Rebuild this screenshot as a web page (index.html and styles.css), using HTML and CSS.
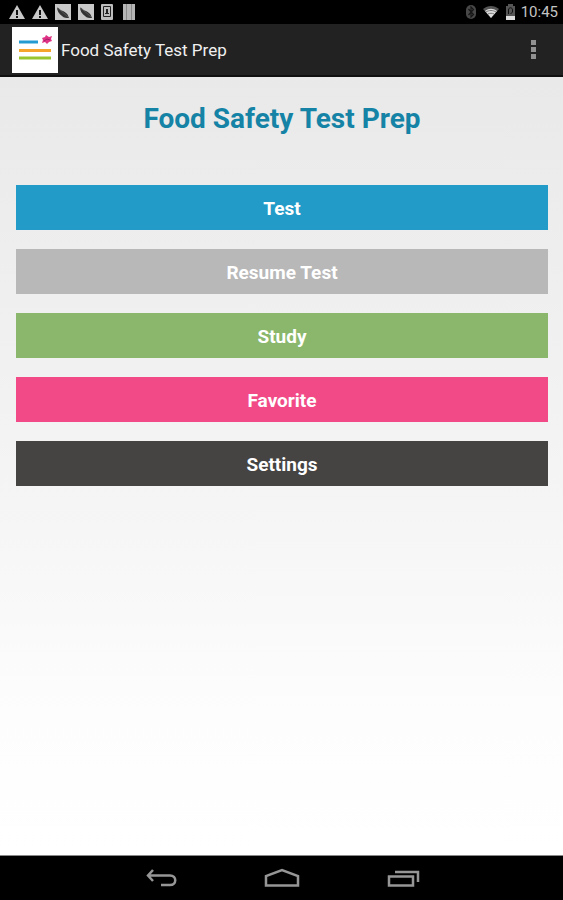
FILE: index.html
```html
<!DOCTYPE html>
<html lang="en">
<head>
<meta charset="utf-8">
<meta name="viewport" content="width=device-width, initial-scale=1">
<title>Food Safety Test Prep</title>
<link rel="stylesheet" href="styles.css">
</head>
<body>
<div class="status-bar">
  <div class="notices">
    <svg width="16" height="16" viewBox="0 0 16 16"><path fill="#c8c8c8" d="M8 1 16 15H0Z"/><path fill="#111" d="M7 6h2v5H7zM7 12h2v2H7z"/></svg>
    <svg width="16" height="16" viewBox="0 0 16 16"><path fill="#c8c8c8" d="M8 1 16 15H0Z"/><path fill="#111" d="M7 6h2v5H7zM7 12h2v2H7z"/></svg>
    <svg width="16" height="16" viewBox="0 0 16 16"><path fill="#c8c8c8" d="M0 0h16v16H0z"/><path fill="#333" d="M2 3c2 4 6 3 9 6 2 1 2 3 3 5-3 0-5 0-7-2-3-2-5-5-5-9Z"/><path d="m3 4 10 9" stroke="#555"/></svg>
    <svg width="16" height="16" viewBox="0 0 16 16"><path fill="#c8c8c8" d="M0 0h16v16H0z"/><path fill="#333" d="M2 3c2 4 6 3 9 6 2 1 2 3 3 5-3 0-5 0-7-2-3-2-5-5-5-9Z"/><path d="m3 4 10 9" stroke="#555"/></svg>
    <svg width="12" height="16" viewBox="0 0 12 16"><rect width="12" height="16" rx="1" fill="#bdbdbd"/><path d="M2.500 2.500h7v10h-7z" fill="none" stroke="#222"/><path fill="#222" d="M5 5h2v4H5zM4 9h4v1H4z"/></svg>
    <svg width="12" height="16" viewBox="0 0 12 16"><path fill="#b5b5b5" d="M0 0h12v16H0z"/><path stroke="#8a8a8a" d="M3.500 0v16M8.500 0v16"/></svg>
  </div>
  <div class="system">
    <svg width="12" height="16" viewBox="0 0 12 16"><rect x="1" y="1" width="10" height="14" rx="5" fill="#484848"/><path d="m3.500 5 5 5.500L6 13V3l2.500 2.500-5 5.500" fill="none" stroke="#161616" stroke-width="1.200"/></svg>
    <svg width="18" height="16" viewBox="0 0 18 16"><path fill="#555" d="M9 14 1 5c5-4 11-4 16 0Z"/><path fill="#ddd" d="M9 14 3 7c4-3 8-3 12 0Z"/><path d="M4 8c3-2 7-2 10 0M6 10c2-1 4-1 6 0" fill="none" stroke="#777"/></svg>
    <svg width="11" height="16" viewBox="0 0 11 16"><path fill="#555" d="M3 0h5v2h2v14H1V2h2z"/><path d="M3.500 10V6c0-3 4-3 4 0v2l-2 2" fill="none" stroke="#111"/><path fill="#ddd" d="M1 12h9v4H1z"/></svg>
    <time class="clock">10:45</time>
  </div>
</div>
<header class="action-bar">
  <svg class="app-icon" width="46" height="46" viewBox="0 0 46 46"><path fill="#fff" d="M0 0h46v46H0z"/><g stroke-width="3"><path stroke="#239bd0" d="M7 15h19"/><path stroke="#f5a52c" d="M7 23.500h32"/><path stroke="#99c52f" d="M7 31h32"/></g><path fill="#df3485" d="m30 11 3-1 1-2 3 2 3-1-1 3 1 2-3 1-2 2-2-2-3 1 1-3Z"/><path d="m32 14 3-2 3 1" fill="none" stroke="#a31c68"/></svg>
  <span class="app-name">Food Safety Test Prep</span>
  <button class="more" type="button" aria-label="More options">
    <svg width="7" height="21" viewBox="0 0 7 21"><path fill="#929292" d="M1 1h5v5H1zM1 8h5v5H1zM1 15h5v5H1z"/></svg>
  </button>
</header>
<main class="content">
  <h1 class="title">Food Safety Test Prep</h1>
  <div class="menu">
    <button type="button" class="choice test">Test</button>
    <button type="button" class="choice resume">Resume Test</button>
    <button type="button" class="choice study">Study</button>
    <button type="button" class="choice favorite">Favorite</button>
    <button type="button" class="choice settings">Settings</button>
  </div>
</main>
<nav class="nav-bar">
  <button type="button" aria-label="Back"><svg width="34" height="22" viewBox="0 0 34 22"><path d="m10 3-5 5.500 5 5.500M5 8.500h22c7 0 7 9.500 0 9.500H18"/></svg></button>
  <button type="button" aria-label="Home"><svg width="36" height="22" viewBox="0 0 36 22"><path d="M2 18.500V9l16-6 16 6v9.500Z"/></svg></button>
  <button type="button" aria-label="Recent apps"><svg width="34" height="22" viewBox="0 0 34 22"><path d="M2 9.500h24v9H2ZM8 5h23v10"/></svg></button>
</nav>
</body>
</html>
```
FILE: styles.css
```css
* {
  box-sizing: border-box;
}

body {
  margin: 0;
  min-height: 100vh;
  display: flex;
  flex-direction: column;
  background: #000;
  font-family: Roboto, "Liberation Sans", sans-serif;
}

button {
  border: 0;
  padding: 0;
  background: none;
  font: inherit;
  color: inherit;
}

svg {
  display: block;
  flex: none;
}

.status-bar {
  height: 24px;
  padding: 0 5px 0 9px;
  display: flex;
  align-items: center;
  justify-content: space-between;
}

.notices {
  display: flex;
  gap: 7px;
}

.notices svg:nth-child(6) {
  margin-left: 3px;
}

.system {
  display: flex;
  align-items: center;
  gap: 5px;
}

.clock {
  color: #c4c4c4;
  font-size: 15px;
  line-height: 24px;
}

.action-bar {
  height: 53px;
  padding: 0 26px 0 12px;
  display: flex;
  align-items: center;
  background: #222;
  border-bottom: 2px solid #101010;
}

.app-name {
  flex: 1;
  margin-left: 3px;
  color: #f0f0f0;
  font-size: 17px;
  line-height: 24px;
}

.content {
  flex: 1;
  padding: 24px 15px 24px 16px;
  background: linear-gradient(#e9e9e9, #f5f5f5 55%, #fdfdfd 82%, #fff);
  border-bottom: 1px solid #888;
}

.title {
  margin: 0 0 48px;
  color: #1583a5;
  font-size: 28px;
  font-weight: 700;
  line-height: 36px;
  text-align: center;
}

.menu {
  display: grid;
  gap: 19px;
}

.choice {
  height: 45px;
  padding-top: 2px;
  color: #fff;
  font-size: 19px;
  font-weight: 700;
}

.test {
  background: #239bc8;
}

.resume {
  background: #b8b8b8;
}

.study {
  background: #8ab76b;
}

.favorite {
  background: #f14a87;
}

.settings {
  background: #454442;
}

.nav-bar {
  height: 44px;
  display: flex;
  align-items: center;
  justify-content: center;
  gap: 87px;
}

.nav-bar path {
  fill: none;
  stroke: #969696;
  stroke-width: 2.500;
}
```
